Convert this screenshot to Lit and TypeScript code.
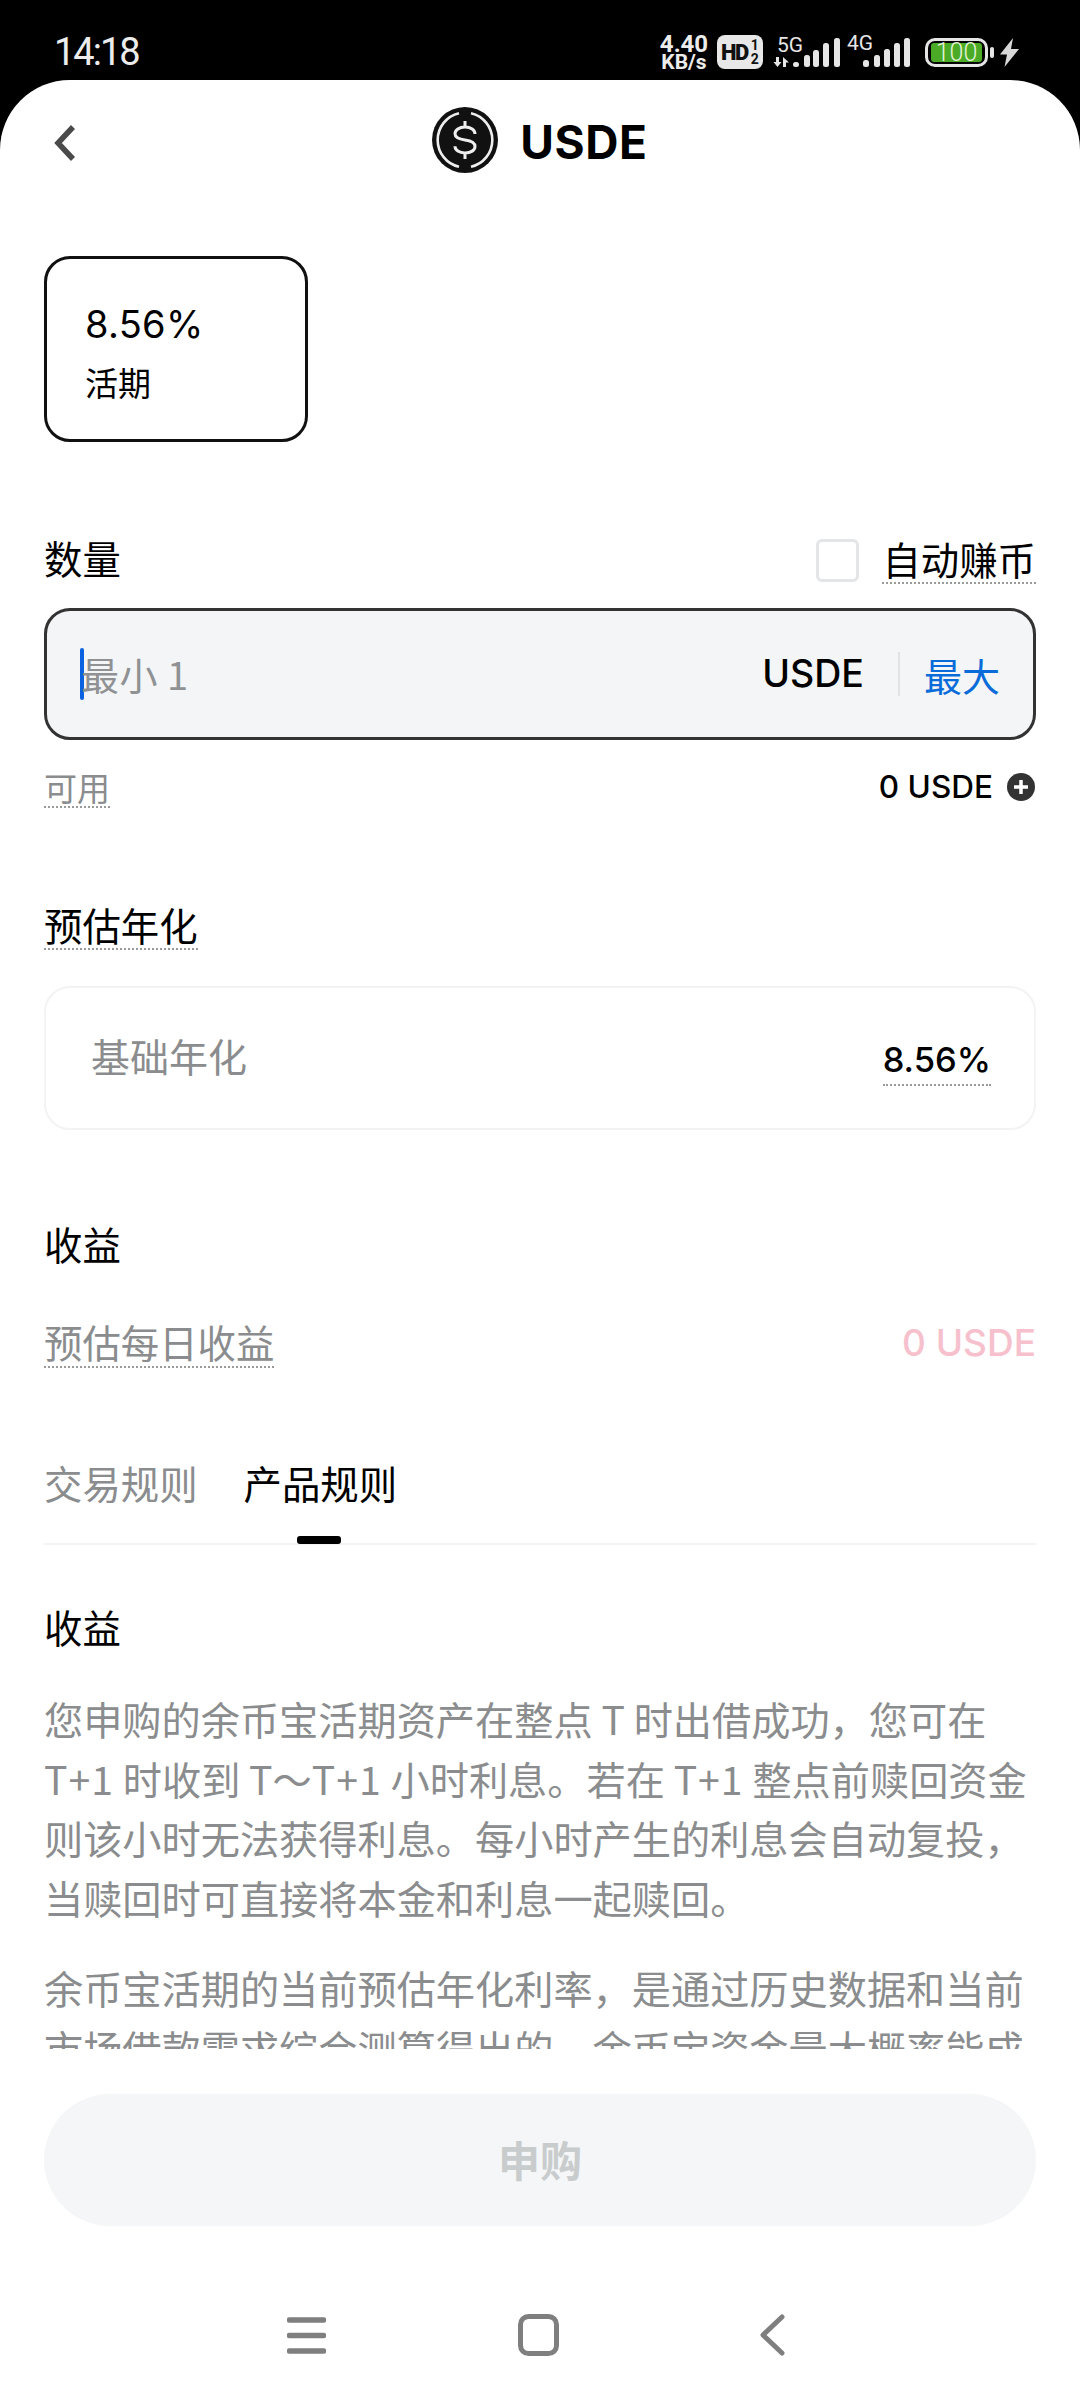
import { LitElement, html, css, svg } from 'lit';
import { customElement } from 'lit/decorators.js';

const signalBars = (xs: number[], tops: number[]) =>
  xs.map((x, i) => svg`<rect x=${x} y=${tops[i]} width="6" height=${42 - tops[i]} rx="2.5" fill="#e6e6e6"></rect>`);

@customElement('app-root')
export class AppRoot extends LitElement {
  static styles = css`
    :host {
      display: block;
      width: 1080px;
      height: 2400px;
      background: #000;
      font-family: 'Inter', 'Noto Sans CJK SC', sans-serif;
      color: #000;
      overflow: hidden;
    }

    .status {
      height: 80px;
      display: flex;
      align-items: flex-start;
      padding: 0 61px 0 54px;
      box-sizing: border-box;
      color: #ececec;
      font-family: 'Roboto', sans-serif;
    }
    .time { font-size: 38px; margin-top: 25px; line-height: 54px; letter-spacing: -2px; }
    .status-right { margin-left: auto; display: flex; align-items: flex-start; padding-top: 25px; }
    .speed { width: 50px; font-weight: 700; text-align: center; margin-top: 9px; }
    .speed div:first-child { font-size: 24px; line-height: 20px; }
    .speed div:last-child { font-size: 21px; line-height: 17px; }
    .hd {
      width: 46px;
      height: 34px;
      margin: 10px 0 0 8px;
      background: #e8e8e8;
      border-radius: 8px;
      color: #111;
      display: flex;
      align-items: center;
      padding-left: 4px;
      box-sizing: border-box;
      font-weight: 700;
    }
    .hd b { font-size: 22px; letter-spacing: -1.5px; }
    .hd span { font-size: 14px; line-height: 14px; margin-left: 3px; text-align: center; }
    .net { display: block; }
    .net.first { margin-left: 10px; }
    .net.second { margin-left: 6px; }
    .battery {
      width: 63px;
      height: 29px;
      margin: 13px 0 0 14px;
      border: 3px solid #e6e6e6;
      border-radius: 10px;
      box-sizing: border-box;
      padding: 2px 3px;
    }
    .battery div {
      height: 19px;
      background: #4bab27;
      border-radius: 3px;
      color: #e3f2d8;
      font-size: 25px;
      font-weight: 300;
      line-height: 19px;
      text-align: center;
    }
    .nub { width: 4px; height: 11px; background: #e6e6e6; border-radius: 2px; margin: 22px 0 0 2px; }
    .bolt { display: block; margin: 13px 0 0 6px; }

    .sheet {
      height: 2320px;
      background: #fff;
      border-radius: 70px 70px 0 0;
      overflow: hidden;
    }
    .header {
      height: 120px;
      display: grid;
      grid-template-columns: 1fr auto 1fr;
      align-items: center;
      padding: 0 45px;
    }
    .back { display: block; margin: 5px 0 0 8px; }
    .coin { display: flex; align-items: center; gap: 22px; }
    .coin svg { display: block; }
    .coin span { font-size: 46px; font-weight: 700; letter-spacing: 0.6px; margin-top: 4px; }

    .scroll {
      height: 1849px;
      overflow: hidden;
      padding: 56px 44px 0;
      box-sizing: border-box;
    }
    .term {
      width: 264px;
      height: 186px;
      box-sizing: border-box;
      border: 3px solid #111;
      border-radius: 26px;
      padding: 43px 0 0 39px;
    }
    .term .rate { font-size: 38px; line-height: 44px; font-weight: 400; letter-spacing: 0.3px; margin-left: -1px; }
    .term .kind { font-size: 33px; line-height: 44px; margin-top: 16px; margin-left: -1px; }

    .row { display: flex; align-items: center; justify-content: space-between; }
    .label { font-size: 38.4px; line-height: 44px; }
    .grey { color: #8a8c8e; }
    .dotted { display: inline-block; border-bottom: 2px dotted #9a9a9a; }

    .amount { margin-top: 95px; height: 46px; }
    .auto { display: flex; align-items: center; gap: 23px; }
    .check {
      width: 43px;
      height: 43px;
      box-sizing: border-box;
      border: 3px solid #e4e5e6;
      border-radius: 6px;
    }
    .auto .label { line-height: 42px; padding-top: 4px; }

    .input {
      margin-top: 25px;
      height: 132px;
      box-sizing: border-box;
      border: 3px solid #333;
      border-radius: 26px;
      background: #f4f5f7;
      display: flex;
      align-items: center;
      padding: 0 33px;
    }
    .caret { width: 4px; height: 52px; background: #0b62e0; border-radius: 2px; }
    .placeholder { font-size: 38px; color: #8f9193; margin-left: -3px; margin-top: -2px; flex: 1; font-family: 'Noto Sans CJK SC', sans-serif; letter-spacing: 0.5px; }
    .unit { font-size: 37.5px; font-weight: 500; margin-top: -2px; }
    .split { width: 2px; height: 44px; background: #e0e2e4; margin: 0 25px 0 34px; }
    .max { font-size: 38px; color: #0a6cd8; margin-left: -1px; }

    .avail { margin-top: 32px; height: 40px; align-items: flex-start; }
    .avail .small { font-size: 33px; line-height: 34px; margin-top: 0; }
    .balance { display: flex; align-items: center; gap: 14px; font-size: 31.5px; line-height: 30px; font-weight: 500; margin-right: 1px; }
    .balance svg { display: block; }

    .estimate { margin-top: 95px; }
    .estimate .label { line-height: 41px; }
    .base {
      margin-top: 36px;
      height: 144px;
      box-sizing: border-box;
      border: 2px solid #f3f3f3;
      border-radius: 26px;
      padding: 0 43px 0 45px;
    }
    .base .value { font-size: 34.5px; line-height: 44px; font-weight: 500; padding-bottom: 2px; margin-top: 8px; }
    .base .name { font-size: 39px; margin-top: 0; }

    .income { margin-top: 94px; }
    .daily { margin-top: 55px; align-items: flex-start; }
    .daily .label { line-height: 43px; }
    .pink { color: #f6c1cd; font-size: 37px; line-height: 44px; font-weight: 500; margin-top: -2px; }

    .tabs {
      margin-top: 72px;
      height: 105px;
      box-sizing: border-box;
      display: flex;
      gap: 46px;
      border-bottom: 2px solid #f3f3f3;
    }
    .tab { position: relative; font-size: 38.4px; line-height: 90px; }
    .tab.off { color: #8a8c8e; }
    .tab.on::after {
      content: '';
      position: absolute;
      left: 50%;
      bottom: -1px;
      width: 44px;
      height: 8px;
      margin-left: -23px;
      background: #000;
      border-radius: 3px;
    }

    .rules-title { margin-top: 62px; }
    .para {
      font-family: 'Noto Sans CJK SC', sans-serif;
      font-size: 39.2px;
      line-height: 59.600px;
      color: #8a8c8e;
      white-space: nowrap;
      margin: 38px 0 0;
    }
    .para + .para { margin-top: 31px; }
    .para span { display: block; }
    .para i { font-style: normal; letter-spacing: 1px; }

    .buy {
      margin: 45px 44px 0;
      height: 132px;
      border-radius: 66px;
      background: #f4f6f7;
      color: #c9cccd;
      font-size: 42px;
      font-weight: 700;
      display: flex;
      align-items: center;
      justify-content: center;
      padding-bottom: 3px;
      box-sizing: border-box;
    }
    .nav {
      display: flex;
      align-items: center;
      padding: 88px 0 0 287px;
    }
    .nav svg { display: block; }
    .nav .home { margin-left: 192px; }
    .nav .prev { margin-left: 200px; }
  `;

  render() {
    return html`
      <div class="status">
        <div class="time">14:18</div>
        <div class="status-right">
          <div class="speed"><div>4.40</div><div>KB/s</div></div>
          <div class="hd"><b>HD</b><span>1<br />2</span></div>
          <svg class="net first" width="68" height="45" viewBox="0 0 68 45">
            <text x="4" y="27" font-size="21" fill="#e6e6e6" font-family="Roboto, sans-serif">5G</text>
            <path d="M3 32h3v5h2.500l-4 5-4-5H3z" fill="#e6e6e6"></path>
            <path d="M10 42V32l6 5.500h-3V42z" fill="#e6e6e6"></path>
            ${signalBars([20, 31, 40, 50, 61], [37, 30, 25, 18, 13])}
          </svg>
          <svg class="net second" width="64" height="45" viewBox="0 0 64 45">
            <text x="0" y="25" font-size="21" fill="#e6e6e6" font-family="Roboto, sans-serif">4G</text>
            ${signalBars([16, 27, 37, 47, 57], [35, 30, 24, 18, 13])}
          </svg>
          <div class="battery"><div>100</div></div>
          <div class="nub"></div>
          <svg class="bolt" width="19" height="29" viewBox="0 0 19 29">
            <path d="M13 0L0 16.500h7L4.500 29 19 11h-8z" fill="#d8d8d8"></path>
          </svg>
        </div>
      </div>

      <div class="sheet">
        <div class="header">
          <svg class="back" width="24" height="38" viewBox="0 0 24 38">
            <path d="M20 3L5 19l15 16" fill="none" stroke="#4a4a4a" stroke-width="5.500"></path>
          </svg>
          <div class="coin">
            <svg width="66" height="66" viewBox="0 0 66 66">
              <circle cx="33" cy="33" r="33" fill="#111"></circle>
              <path d="M27 6.200A27.500 27.500 0 0 0 27 59.800M39 6.200A27.500 27.500 0 0 1 39 59.800" fill="none" stroke="#eee" stroke-width="2.600"></path>
              <path d="M43 27c0-4-4.200-7-10-7s-10 3-10 6.800c0 4 4.300 5.400 10 6.200s10 2.400 10 6.400c0 3.800-4.200 6.600-10 6.600s-10-2.800-10-6.800M33 14v6M33 46v6" fill="none" stroke="#eee" stroke-width="3"></path>
            </svg>
            <span>USDE</span>
          </div>
          <div></div>
        </div>

        <div class="scroll">
          <div class="term">
            <div class="rate">8.56%</div>
            <div class="kind">活期</div>
          </div>

          <div class="row amount">
            <div class="label">数量</div>
            <div class="auto">
              <div class="check"></div>
              <div class="label dotted">自动赚币</div>
            </div>
          </div>

          <div class="input">
            <div class="caret"></div>
            <div class="placeholder">最小 1</div>
            <div class="unit">USDE</div>
            <div class="split"></div>
            <div class="max">最大</div>
          </div>

          <div class="row avail">
            <div class="small grey dotted">可用</div>
            <div class="balance">
              <span>0 USDE</span>
              <svg width="28" height="28" viewBox="0 0 28 28">
                <circle cx="14" cy="14" r="14" fill="#333"></circle>
                <path d="M14 7v14M7 14h14" stroke="#fff" stroke-width="3.500"></path>
              </svg>
            </div>
          </div>

          <div class="estimate"><div class="label dotted">预估年化</div></div>
          <div class="row base">
            <div class="label grey name">基础年化</div>
            <div class="value dotted">8.56%</div>
          </div>

          <div class="label income">收益</div>
          <div class="row daily">
            <div class="label grey dotted">预估每日收益</div>
            <div class="pink">0 USDE</div>
          </div>

          <div class="tabs">
            <div class="tab off">交易规则</div>
            <div class="tab on">产品规则</div>
          </div>

          <div class="label rules-title">收益</div>
          <p class="para">
            <span>您申购的余币宝活期资产在整点 T 时出借成功&#xFF0C;您可在</span>
            <span><i>T+1</i> 时收到 T〜<i>T+1</i> 小时利息。若在 <i>T+1</i> 整点前赎回资金</span>
            <span>则该小时无法获得利息。每小时产生的利息会自动复投&#xFF0C;</span>
            <span>当赎回时可直接将本金和利息一起赎回。</span>
          </p>
          <p class="para">
            <span>余币宝活期的当前预估年化利率&#xFF0C;是通过历史数据和当前</span>
            <span>市场借款需求综合测算得出的。余币宝资金最大概率能成</span>
          </p>
        </div>

        <div class="buy">申购</div>

        <div class="nav">
          <svg width="39" height="37" viewBox="0 0 39 37">
            <path d="M2.500 3h34M2.500 18.500h34M2.500 34h34" stroke="#7f7f7f" stroke-width="5.500" stroke-linecap="round"></path>
          </svg>
          <svg class="home" width="41" height="42" viewBox="0 0 41 42">
            <rect x="2.500" y="2.500" width="36" height="37" rx="8" fill="none" stroke="#7f7f7f" stroke-width="5"></rect>
          </svg>
          <svg class="prev" width="26" height="42" viewBox="0 0 26 42">
            <path d="M23 3L4 21l19 18" fill="none" stroke="#7f7f7f" stroke-width="5" stroke-linecap="round" stroke-linejoin="round"></path>
          </svg>
        </div>
      </div>
    `;
  }
}
